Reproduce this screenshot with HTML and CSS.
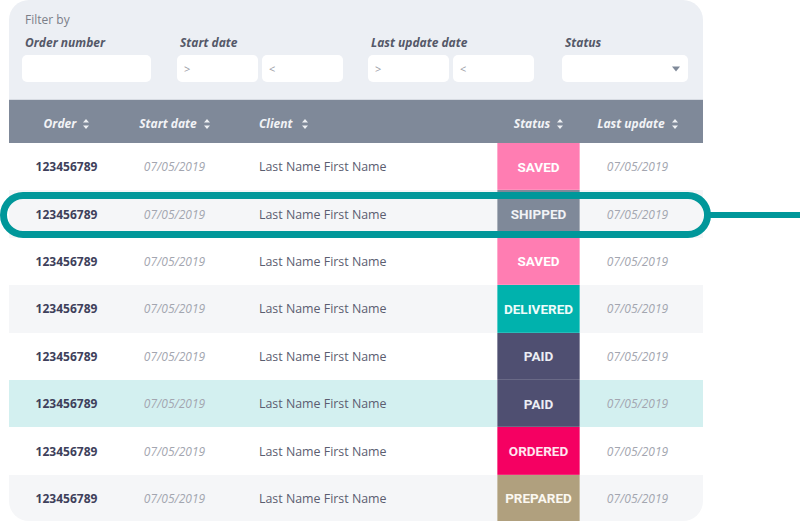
FILE: index.html
```html
<!DOCTYPE html>
<html lang="en">
<head>
<meta charset="utf-8">
<title>Orders</title>
<link rel="stylesheet" href="styles.css">
</head>
<body>
<div class="stage">
  <div class="card">
    <div class="filters">
      <div class="filter-title">Filter by</div>
      <div class="filter-row">
        <div class="fgroup g-order">
          <div class="flabel">Order number</div>
          <div class="inputs"><div class="inp w-order"></div></div>
        </div>
        <div class="fgroup g-start">
          <div class="flabel">Start date</div>
          <div class="inputs"><div class="inp w-half">&gt;</div><div class="inp w-half">&lt;</div></div>
        </div>
        <div class="fgroup g-last">
          <div class="flabel">Last update date</div>
          <div class="inputs"><div class="inp w-half">&gt;</div><div class="inp w-half">&lt;</div></div>
        </div>
        <div class="fgroup g-status">
          <div class="flabel">Status</div>
          <div class="inputs"><div class="inp w-status select"><svg class="caret" width="8" height="6" viewBox="0 0 8 6"><path d="M0 0.5 L8 0.5 L4 5.5 Z" fill="#7f8999"/></svg></div></div>
        </div>
      </div>
    </div>
    <div class="thead">
      <div class="th c-center">Order <svg class="sort" width="6" height="12" viewBox="0 0 6 12"><path d="M0 4.5 L3 1 L6 4.5 Z M0 7.5 L3 11 L6 7.5 Z" fill="#eef0f3"/></svg></div>
      <div class="th c-center">Start date <svg class="sort" width="6" height="12" viewBox="0 0 6 12"><path d="M0 4.5 L3 1 L6 4.5 Z M0 7.5 L3 11 L6 7.5 Z" fill="#eef0f3"/></svg></div>
      <div class="th c-client">Client <svg class="sort sort-wide" width="6" height="12" viewBox="0 0 6 12"><path d="M0 4.5 L3 1 L6 4.5 Z M0 7.5 L3 11 L6 7.5 Z" fill="#eef0f3"/></svg></div>
      <div class="th c-center">Status <svg class="sort" width="6" height="12" viewBox="0 0 6 12"><path d="M0 4.5 L3 1 L6 4.5 Z M0 7.5 L3 11 L6 7.5 Z" fill="#eef0f3"/></svg></div>
      <div class="th c-center c-last">Last update <svg class="sort" width="6" height="12" viewBox="0 0 6 12"><path d="M0 4.5 L3 1 L6 4.5 Z M0 7.5 L3 11 L6 7.5 Z" fill="#eef0f3"/></svg></div>
    </div>
    <div class="tbody">
      <div class="row">
        <div class="td c-center num">123456789</div><div class="td c-center date">07/05/2019</div><div class="td c-client name">Last Name First Name</div><div class="td badge b-saved">SAVED</div><div class="td c-center c-last date">07/05/2019</div>
      </div>
      <div class="row alt">
        <div class="td c-center num">123456789</div><div class="td c-center date">07/05/2019</div><div class="td c-client name">Last Name First Name</div><div class="td badge b-shipped">SHIPPED</div><div class="td c-center c-last date">07/05/2019</div>
      </div>
      <div class="row">
        <div class="td c-center num">123456789</div><div class="td c-center date">07/05/2019</div><div class="td c-client name">Last Name First Name</div><div class="td badge b-saved">SAVED</div><div class="td c-center c-last date">07/05/2019</div>
      </div>
      <div class="row alt">
        <div class="td c-center num">123456789</div><div class="td c-center date">07/05/2019</div><div class="td c-client name">Last Name First Name</div><div class="td badge b-delivered">DELIVERED</div><div class="td c-center c-last date">07/05/2019</div>
      </div>
      <div class="row">
        <div class="td c-center num">123456789</div><div class="td c-center date">07/05/2019</div><div class="td c-client name">Last Name First Name</div><div class="td badge b-paid">PAID</div><div class="td c-center c-last date">07/05/2019</div>
      </div>
      <div class="row hover">
        <div class="td c-center num">123456789</div><div class="td c-center date">07/05/2019</div><div class="td c-client name">Last Name First Name</div><div class="td badge b-paid">PAID</div><div class="td c-center c-last date">07/05/2019</div>
      </div>
      <div class="row">
        <div class="td c-center num">123456789</div><div class="td c-center date">07/05/2019</div><div class="td c-client name">Last Name First Name</div><div class="td badge b-ordered">ORDERED</div><div class="td c-center c-last date">07/05/2019</div>
      </div>
      <div class="row alt">
        <div class="td c-center num">123456789</div><div class="td c-center date">07/05/2019</div><div class="td c-client name">Last Name First Name</div><div class="td badge b-prepared">PREPARED</div><div class="td c-center c-last date">07/05/2019</div>
      </div>
    </div>
  </div>
  <div class="callout"></div>
  <div class="callout-line"></div>
</div>
</body>
</html>
```

FILE: styles.css
```css
* { box-sizing: border-box; }
html, body { margin: 0; padding: 0; background: #ffffff; }
body { font-family: "Open Sans", "Liberation Sans", sans-serif; overflow: hidden; }

.stage { position: relative; width: 800px; height: 522px; }

.card {
  margin-left: 9px;
  width: 694px;
  height: 521px;
  border-radius: 20px;
  overflow: hidden;
  background: #ffffff;
}

.filters {
  background: #eceff4;
  height: 100px;
  padding: 12px 0 0 13px;
  border-bottom: 1px solid #d7dbe2;
}
.filter-title {
  font-size: 12px;
  line-height: 16px;
  color: #7b7e88;
  padding-left: 3px;
}
.filter-row {
  display: flex;
  margin-top: 7px;
}
.fgroup { display: flex; flex-direction: column; }
.g-start { margin-left: 26px; }
.g-last { margin-left: 25px; }
.g-status { margin-left: 28px; }
.flabel {
  font-size: 12px;
  line-height: 16px;
  font-weight: 700;
  font-style: italic;
  color: #545868;
  padding-left: 3px;
}
.inputs { display: flex; gap: 4px; margin-top: 4px; }
.inp {
  height: 27px;
  background: #ffffff;
  border-radius: 5px;
  font-size: 11px;
  line-height: 27px;
  color: #9a9ca4;
  padding-left: 7px;
}
.w-order { width: 129px; }
.w-half { width: 81px; }
.w-status { width: 126px; }
.select { display: flex; align-items: center; justify-content: flex-end; padding-right: 8px; }

.thead, .row {
  display: grid;
  grid-template-columns: 115px 101px 272px 83px 1fr;
}
.thead {
  height: 43px;
  background: #7f8999;
}
.th {
  display: flex;
  align-items: center;
  padding-top: 4px;
  font-size: 12px;
  font-weight: 700;
  font-style: italic;
  color: #f2f3f6;
  white-space: pre;
}
.sort { margin-left: 4px; }
.sort-wide { margin-left: 7px; }
.c-center { justify-content: center; text-align: center; }
.c-client { justify-content: flex-start; padding-left: 34px; }
.c-last { padding-right: 8px; }

.row { height: 47.4px; background: #ffffff; }
.row.alt { background: #f5f6f8; }
.row.hover { background: #d3f0f0; }
.td {
  display: flex;
  align-items: center;
  white-space: nowrap;
}
.num { font-size: 12px; font-weight: 700; color: #3e3f5b; }
.date { font-size: 12px; font-style: italic; color: #a3a6b0; }
.name { font-size: 12.4px; color: #5b5d70; }

.badge {
  justify-content: center;
  font-family: Roboto, "Open Sans", sans-serif;
  font-weight: 700;
  font-size: 13.5px;
  color: #ffffff;
  box-shadow: inset 1px 0 0 rgba(255,255,255,0.35), inset -1px 0 0 rgba(255,255,255,0.35), inset 0 -1px 0 rgba(255,255,255,0.15);
}
.b-saved { background: #ff7db2; }
.b-shipped { background: #7f8999; color: #f1f3f6; }
.b-delivered { background: #00b2ad; color: #eefcfb; }
.b-paid { background: #4f4f71; color: #eceef4; }
.b-ordered { background: #f50062; color: #ffe6ef; }
.b-prepared { background: #b0a07e; color: #fbf8f1; }

.callout {
  position: absolute;
  left: 0;
  top: 192px;
  width: 711px;
  height: 46px;
  border: 7px solid #00979a;
  border-radius: 23px;
}
.callout-line {
  position: absolute;
  left: 710px;
  top: 212px;
  width: 90px;
  height: 6px;
  background: #00979a;
}
```
